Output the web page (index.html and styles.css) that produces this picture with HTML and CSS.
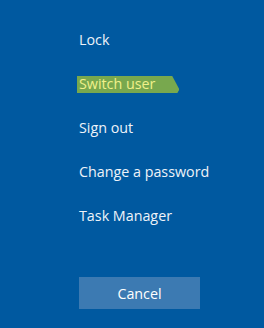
FILE: index.html
```html
<!DOCTYPE html>
<html lang="en">
	<head>
		<meta charset="utf-8" />
		<title>Security options</title>
		<link rel="stylesheet" href="styles.css">
	</head>
	<body>
		<div class="screen">
			<ul class="options">
				<li class="option">Lock</li>
				<li class="option"><span class="marked">Switch user</span></li>
				<li class="option">Sign out</li>
				<li class="option">Change a password</li>
				<li class="option">Task Manager</li>
			</ul>
			<button class="cancel">Cancel</button>
		</div>
	</body>
</html>
```
FILE: styles.css
```css
body {
	margin: 0;
	background-color: #0059a0;
	font-family: "Open Sans", "Noto Sans", sans-serif;
	color: #eef3f9;
}
.screen {
	display: flex;
	flex-direction: column;
	align-items: flex-start;
	padding: 18px 0 0 79px;
	height: 328px;
	box-sizing: border-box;
}
.options {
	list-style-type: none;
	margin: 0;
	padding: 0;
}
.option {
	font-size: 14.3px;
	line-height: 44px;
	height: 44px;
}
.marked {
	display: inline-block;
	margin-left: -2px;
	padding: 0 24px 1px 2px;
	line-height: 16px;
	background-color: #78a84e;
	color: #f0f08a;
	clip-path: polygon(0 0, 93% 0, 100% 80%, 98% 100%, 0 100%);
}
.cancel {
	margin-top: 39px;
	width: 121px;
	height: 32px;
	border: none;
	background-color: #3c7ab2;
	color: #ffffff;
	font-family: "Open Sans", "Noto Sans", sans-serif;
	font-size: 14.3px;
	padding: 0;
}
```
